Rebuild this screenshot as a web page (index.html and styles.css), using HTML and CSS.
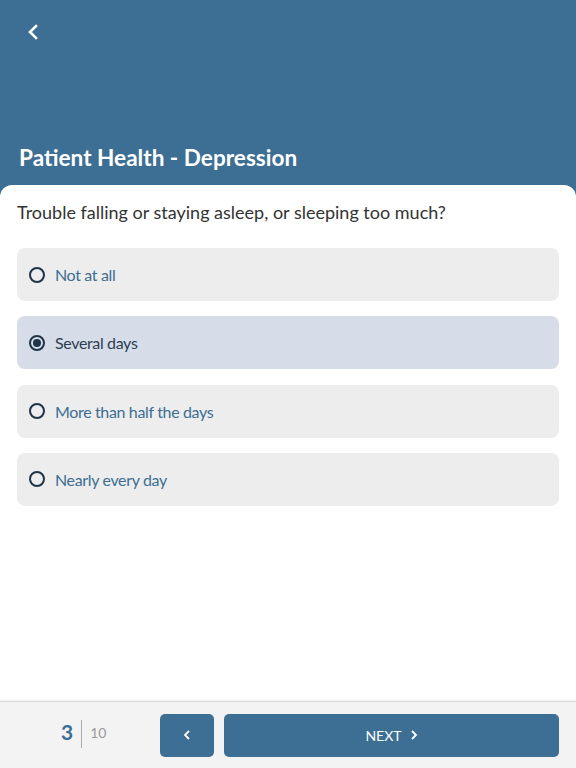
FILE: index.html
```html
<!DOCTYPE html>
<html>
<head>
<meta charset="utf-8">
<link rel="stylesheet" href="styles.css">
</head>
<body>
<div class="app">
  <header class="header">
    <button class="back" aria-label="Back">
      <svg width="12" height="16" viewBox="0 0 12 16"><path d="M9 2 L3 8 L9 14" fill="none" stroke="#fff" stroke-width="2.6" stroke-linecap="square"/></svg>
    </button>
    <h1 class="title">Patient Health - Depression</h1>
  </header>
  <main class="card">
    <p class="question">Trouble falling or staying asleep, or sleeping too much?</p>
    <div class="options">
      <div class="option"><span class="radio"></span><span class="label">Not at all</span></div>
      <div class="option selected"><span class="radio"></span><span class="label">Several days</span></div>
      <div class="option"><span class="radio"></span><span class="label">More than half the days</span></div>
      <div class="option"><span class="radio"></span><span class="label">Nearly every day</span></div>
    </div>
  </main>
  <footer class="footer">
    <div class="progress"><span class="current">3</span><span class="sep"></span><span class="total">10</span></div>
    <button class="btn prev" aria-label="Previous">
      <svg width="8" height="12" viewBox="0 0 8 12"><path d="M6 2 L2 6 L6 10" fill="none" stroke="#fff" stroke-width="1.8"/></svg>
    </button>
    <button class="btn next">NEXT
      <svg width="8" height="12" viewBox="0 0 8 12"><path d="M2 2 L6 6 L2 10" fill="none" stroke="#fff" stroke-width="1.8"/></svg>
    </button>
  </footer>
</div>
</body>
</html>
```
FILE: styles.css
```css
* { box-sizing: border-box; }
html, body { margin: 0; padding: 0; }
body {
  font-family: Lato, "Open Sans", sans-serif;
  background: #3d6e93;
  width: 576px;
  height: 768px;
  overflow: hidden;
}
.app {
  display: flex;
  flex-direction: column;
  height: 768px;
}
.header {
  height: 185px;
  background: #3d6e93;
  padding: 0 19px;
  display: flex;
  flex-direction: column;
}
.back {
  background: none;
  border: 0;
  padding: 0;
  margin: 24px 0 0 8px;
  width: 12px;
  height: 16px;
  display: flex;
}
.title {
  margin: 104px 0 0 0;
  color: #fff;
  font-size: 22.6px;
  font-weight: 700;
  line-height: 28px;
}
.card {
  flex: 1;
  background: #fff;
  border-radius: 12px 12px 0 0;
  padding: 0 17px;
}
.question {
  margin: 15px 0 0 0;
  font-size: 18px;
  line-height: 24px;
  color: #333;
}
.options {
  display: flex;
  flex-direction: column;
  gap: 15.33px;
  margin-top: 24px;
}
.option {
  height: 53px;
  flex: 0 0 53px;
  border-radius: 8px;
  background: #ededed;
  display: flex;
  align-items: center;
  padding-left: 12px;
}
.option.selected { background: #d6dce8; }
.radio {
  width: 16px;
  height: 16px;
  border: 2px solid #1f3447;
  border-radius: 50%;
  margin-right: 10px;
  position: relative;
}
.option.selected .radio::after {
  content: "";
  position: absolute;
  left: 2px; top: 2px;
  width: 8px; height: 8px;
  border-radius: 50%;
  background: #1f3447;
}
.label {
  font-size: 16px;
  letter-spacing: -0.35px;
  color: #3d6e93;
}
.option.selected .label { color: #2d3e50; }
.footer {
  height: 67px;
  flex: 0 0 67px;
  background: #f3f3f3;
  border-top: 1px solid #d8d8d8;
  box-shadow: 0 -1px 2px rgba(0,0,0,0.08);
  display: flex;
  align-items: center;
  padding: 0 17px 0 61px;
}
.progress {
  display: flex;
  align-items: center;
  width: 99px;
  margin-top: -3px;
}
.current {
  color: #3d6e93;
  font-size: 21px;
  font-weight: 700;
  line-height: 22px;
  margin-top: -3px;
}
.sep {
  width: 1px;
  height: 28px;
  background: #aaa;
  margin: 0 8px 0 8px;
}
.total {
  color: #999;
  font-size: 14px;
  line-height: 16px;
  margin-top: -1px;
}
.btn {
  background: #3d6e93;
  border: 0;
  border-radius: 5px;
  height: 43px;
  color: #fff;
  font-family: Lato, sans-serif;
  font-size: 14px;
  display: flex;
  align-items: center;
  justify-content: center;
}
.prev { width: 54px; margin-right: 10px; }
.next { flex: 1; gap: 8px; }
```
